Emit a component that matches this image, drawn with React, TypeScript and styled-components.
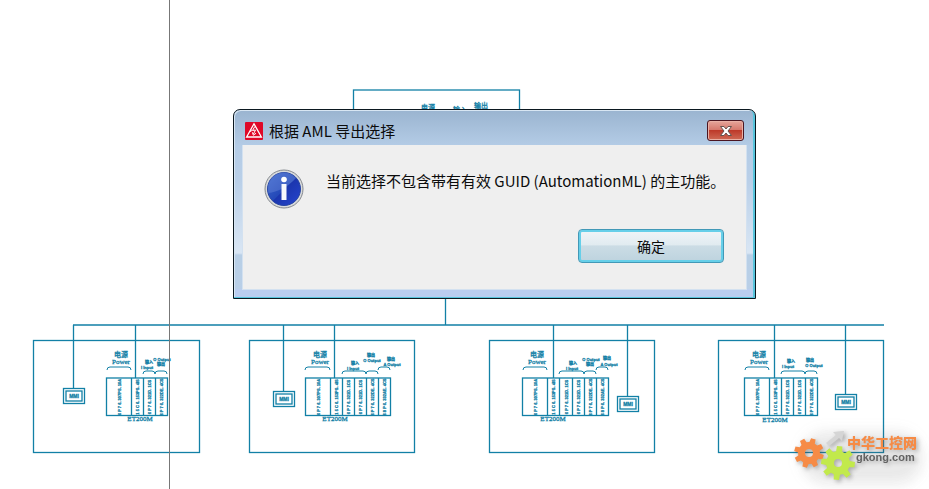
import React from "react";
import styled, { createGlobalStyle } from "styled-components";

const LINE = "#1280a6";

const GlobalStyle = createGlobalStyle`
  *, *::before, *::after { box-sizing: border-box; }
  body {
    margin: 0;
    background: #fff;
    overflow: hidden;
    font-family: "Noto Sans CJK SC", "Noto Sans", sans-serif;
    font-size: 15px;
    color: #0c0c0c;
  }
`;

const Workspace = styled.main`
  position: relative;
  min-height: 100vh;
  overflow: hidden;
`;

const Drawing = styled.svg`
  display: block;
  width: 100%;
  height: auto;
  fill: none;
  stroke: ${LINE};
  stroke-width: 1.3;

  text {
    fill: ${LINE};
    stroke: ${LINE};
    stroke-width: 0.3;
    text-anchor: middle;
    font-family: "Liberation Sans", "Noto Sans CJK SC", sans-serif;
    font-size: 4px;
    font-weight: 700;
  }
  text.caption {
    font-family: "Liberation Serif", "Noto Sans CJK SC", serif;
    font-size: 7px;
    font-weight: 400;
  }
  text.panel { font-size: 5px; }
`;

const Dialog = styled.section`
  position: absolute;
  top: 109px;
  left: 233px;
  width: 523px;
  display: flex;
  flex-direction: column;
  padding: 0 8px 8px;
  border: 1px solid #0b1820;
  border-radius: 7px 7px 0 0;
  background:
    linear-gradient(#bacdf0, #bacdf0) bottom / 100% 9px no-repeat,
    linear-gradient(#9ab4d0 0, #b4cce6 36px, #b9cfe8 70px, #d9e6f4 143px, #b8cfe6 145px, #b9cfe8 100%);
  box-shadow: inset -2px -1px 0 #57c4dc, inset 1px 1px 0 #d8e6f3;
`;

const TitleBar = styled.header`
  display: flex;
  align-items: center;
  gap: 5px;
  height: 35px;
  padding: 6px 3px 0 2px;
`;

const Title = styled.h1`
  flex: 1;
  margin: 0;
  font-size: 15px;
  font-weight: 400;
  line-height: 20px;
`;

const CloseButton = styled.button`
  display: grid;
  place-items: center;
  width: 37px;
  height: 21px;
  padding: 0;
  border: 1px solid #4b1520;
  border-radius: 3px;
  background: linear-gradient(#e6a69b 0, #d6786c 47%, #bd3a2a 50%, #cf6a55 100%);
  box-shadow: inset 0 0 0 1px #e9b0a5;
`;

const Body = styled.div`
  display: grid;
  grid-template-columns: auto minmax(0, 1fr);
  column-gap: 22px;
  row-gap: 20px;
  padding: 24px 22px 26px 21px;
  border: 1px solid #d3e1f0;
  border-top: 0;
  background: #efefef;
`;

const Message = styled.p`
  margin: 0;
  font-size: 15px;
  line-height: 24px;
  white-space: nowrap;
`;

const OkButton = styled.button`
  grid-column: 1 / -1;
  justify-self: end;
  width: 146px;
  height: 34px;
  padding: 0;
  border: 1px solid #4299b7;
  border-radius: 4px;
  background: linear-gradient(#f0f5f8 0, #e1ebf0 46%, #cbdce5 50%, #bdd3de 100%);
  box-shadow: inset 0 0 0 2px #66cfe9;
  color: #0c0c0c;
  font-family: inherit;
  font-size: 14px;
`;

const Watermark = styled.aside`
  position: absolute;
  right: 12px;
  bottom: 6px;
  display: flex;
  align-items: flex-start;
  filter: drop-shadow(2px 2px 2px rgba(60, 60, 60, 0.4));

  &::before {
    content: "";
    position: absolute;
    inset: 2px -4px 0 8px;
    border-radius: 24px;
    background: rgba(120, 120, 120, 0.1);
    filter: blur(7px);
  }
`;

const Brand = styled.div`
  position: relative;
  display: flex;
  flex-direction: column;
  margin-left: -8px;
  padding-top: 7px;
  color: #636363;
  font-family: "Liberation Sans", "Noto Sans CJK SC", sans-serif;
  line-height: 14px;
`;

const BrandName = styled.strong`
  color: #f68b46;
  font-size: 14px;
  font-weight: 900;
`;

const BrandDomain = styled.span`
  padding-left: 9px;
  font-size: 11px;
  font-weight: 700;
`;

const Gears = styled.svg`
  position: relative;
  width: 62px;
  height: 54px;
`;

type Point = [number, number];
type Caption = { text: string; at: Point };
type Station = {
  x: number;
  width: number;
  panel: Point;
  drop: number;
  columns: number[];
  modules: string[];
  name: Point;
  braces: [number, number, number][];
  captions: Caption[];
};

const PS = "6 P 7 6. 307PS. 10A";
const IM = "1 5 C 6. 153PS. 4IS";
const DI = "6 P 7 6. 321D. 1CS";
const DO = "6 P 7 6. 322DE. 4CS";
const AO = "6 8 P 6. 332AE. 4CS";

const stations: Station[] = [
  {
    x: 33, width: 166, panel: [63, 388], drop: 135,
    columns: [106, 131, 143, 155, 167], modules: [PS, IM, DI, DO], name: [140, 421],
    braces: [[107, 131, 367], [143, 155, 371], [155, 167, 371]],
    captions: [
      { text: "输入", at: [149, 364] }, { text: "I Input", at: [147, 369] },
      { text: "O Output", at: [162, 361] }, { text: "输出", at: [161, 366] },
    ],
  },
  {
    x: 249, width: 165, panel: [273, 391], drop: 334,
    columns: [305, 330, 342, 354, 366, 378, 390], modules: [PS, IM, DI, DI, DO, AO], name: [335, 421],
    braces: [[305, 330, 367], [342, 366, 371], [366, 378, 371], [378, 390, 367]],
    captions: [
      { text: "输入", at: [355, 365] }, { text: "I Input", at: [353, 370] },
      { text: "输出", at: [371, 357] }, { text: "O Output", at: [372, 362] },
      { text: "输出", at: [391, 361] }, { text: "A Output", at: [392, 366] },
    ],
  },
  {
    x: 489, width: 165, panel: [617, 396], drop: 553,
    columns: [522, 547, 559, 572, 584, 596, 608], modules: [PS, IM, DI, DI, DO, AO], name: [553, 421],
    braces: [[523, 547, 367], [559, 584, 371], [584, 596, 371], [596, 608, 367]],
    captions: [
      { text: "输入", at: [573, 365] }, { text: "I Input", at: [572, 370] },
      { text: "O Output", at: [591, 361] }, { text: "输出", at: [590, 366] },
      { text: "输出", at: [607, 360] }, { text: "A Output", at: [609, 366] },
    ],
  },
  {
    x: 718, width: 165, panel: [835, 394], drop: 774,
    columns: [744, 769, 781, 793, 805, 817], modules: [PS, IM, DI, DI, DO], name: [775, 422],
    braces: [[745, 769, 367], [781, 805, 371], [805, 817, 371]],
    captions: [
      { text: "输入", at: [791, 363] }, { text: "I Input", at: [788, 368] },
      { text: "输出", at: [810, 362] }, { text: "O Output", at: [814, 367] },
    ],
  },
];

function StationDrawing({ station: s }: { station: Station }) {
  const [px, py] = s.panel;
  const left = s.columns[0];
  const right = s.columns[s.columns.length - 1];
  return (
    <g>
      <rect x={s.x + 0.5} y="340.5" width={s.width} height="112" />
      <path d={`M${px + 10.5} 325V${py}M${s.drop + 0.5} 325V378`} />
      <rect x={px + 0.5} y={py + 0.5} width="21" height="15" />
      <rect x={px + 3} y={py + 3} width="16" height="10" />
      <text className="panel" x={px + 11} y={py + 10}>MMI</text>
      <rect x={left + 0.5} y="378" width={right - left} height="37.5" />
      {s.columns.slice(1, -1).map((x) => <path key={x} d={`M${x + 0.5} 378V415`} />)}
      {s.modules.map((label, i) => (
        <text
          key={i}
          transform={`translate(${(s.columns[i] + s.columns[i + 1]) / 2 + 2} 397) rotate(-90)`}
        >
          {label}
        </text>
      ))}
      {s.braces.map(([a, b, y]) => (
        <path key={a} strokeWidth="1" d={`M${a} ${y + 3}q0-3 3-3H${b - 3}q3 0 3 3`} />
      ))}
      <text className="caption" x={left + 15} y="357">电源</text>
      <text className="caption" x={left + 15} y="364">Power</text>
      {s.captions.map((c, i) => (
        <text key={i} x={c.at[0]} y={c.at[1]}>{c.text}</text>
      ))}
      <text className="caption" x={s.name[0]} y={s.name[1]}>ET200M</text>
    </g>
  );
}

function gearPath(cx: number, cy: number, outer: number, inner: number, teeth: number, turn: number) {
  const points: string[] = [];
  const step = (Math.PI * 2) / teeth;
  for (let i = 0; i < teeth; i++) {
    const a = turn + i * step;
    [[-0.33, inner], [-0.2, outer], [0.2, outer], [0.33, inner]].forEach(([f, r]) => {
      points.push(`${(cx + Math.cos(a + f * step) * r).toFixed(1)} ${(cy + Math.sin(a + f * step) * r).toFixed(1)}`);
    });
  }
  return `M${points.join("L")}Z`;
}

function ring(cx: number, cy: number, r: number) {
  return `M${cx - r} ${cy}a${r} ${r} 0 1 0 ${2 * r} 0a${r} ${r} 0 1 0 ${-2 * r} 0Z`;
}

function WarningIcon() {
  return (
    <svg width="20" height="20" viewBox="0 0 20 20" aria-hidden="true">
      <rect x="1" y="1" width="18" height="18" rx="1" fill="#df0928" />
      <path d="M10 2.8 17.4 16H2.6Z" fill="none" stroke="#fff" strokeWidth="1.3" />
      <path d="M10.8 5.5 8.5 9.5 11.5 9 9.4 13M8.4 11.3 9.3 14.2 12 12.3M7.6 8.7 6.5 11" fill="none" stroke="#fff" />
    </svg>
  );
}

function InfoIcon() {
  return (
    <svg width="40" height="40" viewBox="0 0 40 40" role="img" aria-label="信息">
      <defs>
        <linearGradient id="ball" x1="0" y1="0" x2="1" y2="1">
          <stop offset="0" stopColor="#3f69cf" />
          <stop offset=".5" stopColor="#2449b8" />
          <stop offset=".52" stopColor="#1b36ae" />
          <stop offset="1" stopColor="#2546d0" />
        </linearGradient>
      </defs>
      <circle cx="20" cy="20" r="19" fill="#d9dbdc" stroke="#85898f" />
      <circle cx="20" cy="20" r="16.5" fill="url(#ball)" stroke="#2745a4" />
      <path d="M4.5 24C13 23 24 18 32 9A16 16 0 0 0 4.5 24Z" fill="#7896df" opacity=".35" />
      <circle cx="20" cy="10.5" r="2.8" fill="#fff" />
      <path d="M17.500 15h5v16h-5Z" fill="#f5f7fc" />
    </svg>
  );
}

export default function App() {
  return (
    <>
      <GlobalStyle />
      <Workspace>
        <Drawing viewBox="0 0 929 489" role="img" aria-label="ET200M">
          <rect x="353.500" y="90" width="166" height="100" />
          <text className="caption" x="428" y="110">电源</text>
          <text className="caption" x="460" y="112">输入</text>
          <text className="caption" x="481" y="108">输出</text>
          <path d="M445.500 298V325M73 325H884" />
          {stations.map((s) => <StationDrawing key={s.x} station={s} />)}
          <path d="M169.500 0V489" stroke="#777" strokeWidth="1" />
        </Drawing>

        <Dialog role="dialog" aria-labelledby="dialog-title" aria-describedby="dialog-message">
          <TitleBar>
            <WarningIcon />
            <Title id="dialog-title">根据 AML 导出选择</Title>
            <CloseButton type="button" aria-label="关闭">
              <svg width="14" height="12" viewBox="0 0 14 12" aria-hidden="true">
                <path d="M1.500 1.500H5L7 4l2-2.500h3.500L9 6l3.500 4.500H9L7 8l-2 2.500H1.500L5 6Z" fill="#fff" stroke="#65534f" />
              </svg>
            </CloseButton>
          </TitleBar>
          <Body>
            <InfoIcon />
            <Message id="dialog-message">当前选择不包含带有有效 GUID (AutomationML) 的主功能。</Message>
            <OkButton type="button">确定</OkButton>
          </Body>
        </Dialog>

        <Watermark>
          <Gears viewBox="0 0 62 54" aria-hidden="true">
            <path d={gearPath(16, 24, 15, 11, 8, 0.3) + ring(16, 24, 4)} fill="#f68b46" fillRule="evenodd" />
            <path d={gearPath(45, 34, 17, 12, 8, 0.1) + ring(45, 34, 4)} fill="#c2e94c" fillRule="evenodd" />
            <path d="M33 14 43 6 40 3 51 2 49 12 46 9 36 17Z" fill="#d5d5d5" />
          </Gears>
          <Brand>
            <BrandName>中华工控网</BrandName>
            <BrandDomain>gkong.com</BrandDomain>
          </Brand>
        </Watermark>
      </Workspace>
    </>
  );
}
